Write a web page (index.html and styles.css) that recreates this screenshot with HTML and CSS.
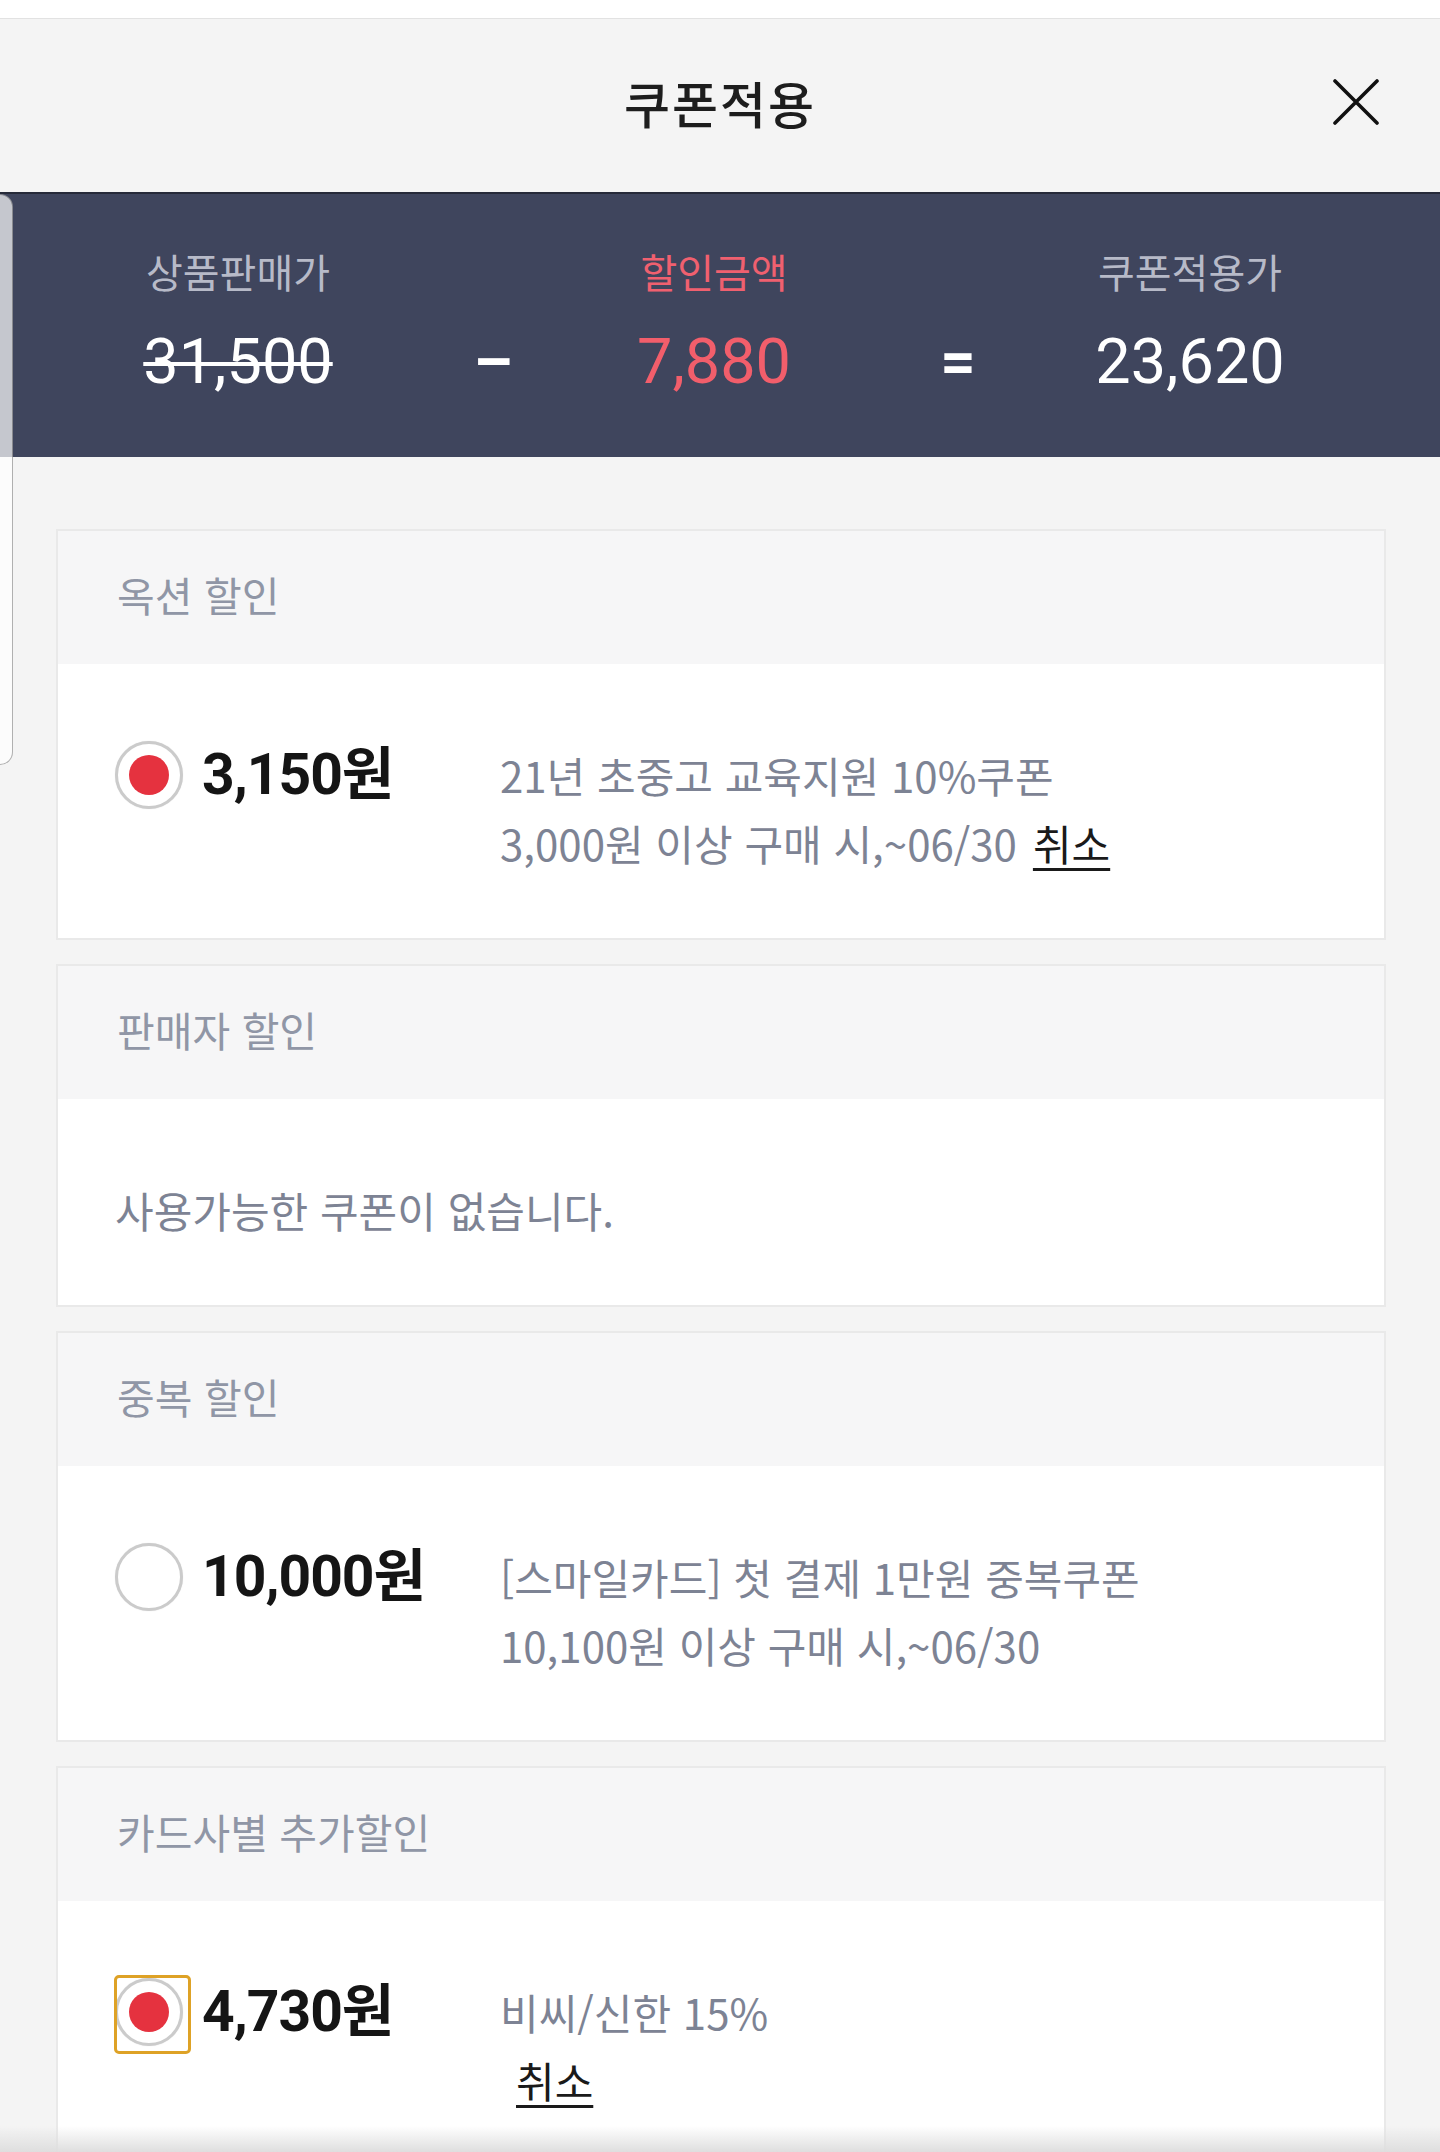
FILE: index.html
```html
<!DOCTYPE html>
<html lang="ko">
<head>
<meta charset="utf-8">
<title>쿠폰적용</title>
<link rel="stylesheet" href="styles.css">
</head>
<body>
<div class="page">
  <div class="topstrip"></div>
  <header class="header">
    <div></div>
    <h1 class="title">쿠폰적용</h1>
    <button class="close" aria-label="닫기">
      <svg width="46" height="46" viewBox="0 0 46 46"><path d="M2 2 L44 44 M44 2 L2 44" stroke="#111" stroke-width="3.6" stroke-linecap="round" fill="none"/></svg>
    </button>
  </header>

  <section class="band">
    <div class="band-grid">
      <div class="lbl c1">상품판매가</div>
      <div class="lbl c3 red">할인금액</div>
      <div class="lbl c5">쿠폰적용가</div>
      <div class="num c1 strike">31,500</div>
      <div class="op c2">–</div>
      <div class="num c3 red">7,880</div>
      <div class="op c4">=</div>
      <div class="num c5">23,620</div>
    </div>
  </section>

  <main class="cards">
    <div class="card">
      <div class="card-head">옥션 할인</div>
      <div class="card-body">
        <div class="row">
          <div class="radio-wrap"><span class="radio on"></span></div>
          <div class="amount">3,150원</div>
          <div class="desc">
            <div>21년 초중고 교육지원 10%쿠폰</div>
            <div>3,000원 이상 구매 시,~06/30<a class="cancel" href="#">취소</a></div>
          </div>
        </div>
      </div>
    </div>

    <div class="card">
      <div class="card-head">판매자 할인</div>
      <div class="card-body">
        <div class="empty">사용가능한 쿠폰이 없습니다.</div>
      </div>
    </div>

    <div class="card">
      <div class="card-head">중복 할인</div>
      <div class="card-body">
        <div class="row">
          <div class="radio-wrap"><span class="radio"></span></div>
          <div class="amount">10,000원</div>
          <div class="desc">
            <div>[스마일카드] 첫 결제 1만원 중복쿠폰</div>
            <div>10,100원 이상 구매 시,~06/30</div>
          </div>
        </div>
      </div>
    </div>

    <div class="card">
      <div class="card-head">카드사별 추가할인</div>
      <div class="card-body">
        <div class="row">
          <div class="radio-wrap focus"><span class="radio on"></span></div>
          <div class="amount">4,730원</div>
          <div class="desc">
            <div>비씨/신한 15%</div>
            <div><a class="cancel" href="#">취소</a></div>
          </div>
        </div>
      </div>
    </div>
  </main>

  <div class="side-tab"></div>
  <div class="bottom-shade"></div>
</div>
</body>
</html>
```

FILE: styles.css
```css
* { box-sizing: border-box; }
html, body { margin: 0; padding: 0; }
body {
  background: #f4f4f4;
  font-family: Roboto, "Noto Sans CJK KR", sans-serif;
  color: #111;
}
.page {
  position: relative;
  width: 1440px;
  height: 2152px;
  overflow: hidden;
  background: #f4f4f4;
}
.topstrip {
  height: 19px;
  background: #fff;
  border-bottom: 1px solid #e2e2e2;
}
.header {
  height: 173px;
  background: #f4f4f4;
  display: grid;
  grid-template-columns: 1fr auto 1fr;
  align-items: center;
  padding-bottom: 8px;
}
.title {
  margin: 0;
  font-family: "Noto Sans CJK KR", sans-serif;
  font-size: 50px;
  font-weight: 500;
  color: #1d1d1d;
  letter-spacing: 2px;
}
.close {
  justify-self: end;
  margin-right: 61px;
  padding: 0;
  border: 0;
  background: none;
  width: 46px;
  height: 46px;
  display: flex;
}
.band {
  height: 265px;
  background: #3f455d;
  border-top: 2px solid #262a39;
}
.band-grid {
  display: grid;
  grid-template-columns: 396px 114px 328px 160px 304px;
  grid-template-rows: 44px 72px;
  row-gap: 33px;
  padding: 55px 98px 0 40px;
}
.lbl {
  grid-row: 1;
  justify-self: center;
  font-family: "Noto Sans CJK KR", sans-serif;
  font-size: 40px;
  line-height: 44px;
  color: #b7bac8;
}
.num {
  grid-row: 2;
  justify-self: center;
  font-size: 63px;
  line-height: 72px;
  color: #fff;
}
.op {
  grid-row: 2;
  justify-self: center;
  font-size: 62px;
  line-height: 72px;
  font-weight: 700;
  color: #fff;
}
.c1 { grid-column: 1; }
.c2 { grid-column: 2; }
.c3 { grid-column: 3; }
.c4 { grid-column: 4; }
.c5 { grid-column: 5; }
.lbl.red { color: #f0606f; }
.num.red { color: #f25e6b; }
.strike {
  text-decoration: line-through;
  text-decoration-thickness: 4px;
  text-decoration-color: #fff;
}

.cards {
  display: flex;
  flex-direction: column;
  gap: 24px;
  padding: 72px 54px 0 56px;
}
.card {
  border: 2px solid #e9e9e9;
  background: #fff;
}
.card-head {
  height: 133px;
  background: #f6f6f7;
  display: flex;
  align-items: center;
  padding-left: 59px;
  padding-bottom: 8px;
  font-family: "Noto Sans CJK KR", sans-serif;
  font-size: 41px;
  color: #9096a6;
}
.card-body {
  padding: 77px 40px 61px 57px;
}
.row {
  display: flex;
  align-items: flex-start;
}
.radio-wrap {
  width: 68px;
  height: 68px;
  display: flex;
  align-items: center;
  justify-content: center;
  flex: none;
  position: relative;
}
.radio-wrap.focus::after {
  content: "";
  position: absolute;
  left: -1px;
  top: -3px;
  width: 71px;
  height: 73px;
  border: 3px solid #dea226;
  border-radius: 5px;
}
.radio {
  width: 68px;
  height: 68px;
  border-radius: 50%;
  border: 3px solid #cbcbcb;
  box-shadow: 0 0 1px rgba(0,0,0,0.15);
  background: #fff;
  display: flex;
  align-items: center;
  justify-content: center;
}
.radio.on::before {
  content: "";
  width: 40px;
  height: 40px;
  border-radius: 50%;
  background: #e5323f;
}
.amount {
  width: 317px;
  flex: none;
  padding-left: 19px;
  font-size: 57px;
  line-height: 68px;
  font-weight: 700;
  color: #151515;
  letter-spacing: -1px;
}
.desc {
  font-family: "Noto Sans CJK KR", sans-serif;
  font-size: 42px;
  line-height: 68px;
  color: #7d8394;
}
.cancel {
  margin-left: 16px;
  color: #1a1a1a;
  text-decoration: underline;
  text-decoration-thickness: 3px;
  text-underline-offset: 7px;
}
.empty {
  font-family: "Noto Sans CJK KR", sans-serif;
  font-size: 42px;
  line-height: 68px;
  color: #7d8394;
}
.side-tab {
  position: absolute;
  left: 0;
  top: 194px;
  width: 13px;
  height: 571px;
  background: rgba(255,255,255,0.7);
  border: 1.5px solid rgba(0,0,0,0.3);
  border-left: 0;
  border-radius: 0 14px 14px 0;
}
.bottom-shade {
  position: absolute;
  left: 0;
  right: 0;
  bottom: 0;
  height: 26px;
  background: linear-gradient(to bottom, rgba(230,230,230,0), rgba(222,222,222,1));
}
```
